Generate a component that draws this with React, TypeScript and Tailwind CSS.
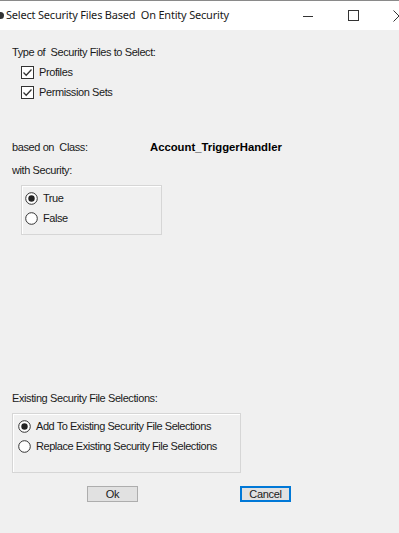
import React from 'react'

const FONT = { fontFamily: '"Liberation Sans", Arial, sans-serif' }

function CheckBox({ label }: { label: string }) {
  return (
    <div className="flex h-[20px] items-center pl-[21px]">
      <svg width="13" height="13" viewBox="0 0 13 13" className="shrink-0">
        <rect x="0.5" y="0.5" width="12" height="12" fill="#ffffff" stroke="#333333" />
        <path d="M2.5 6.5 L5.2 9.2 L10.5 3.5" fill="none" stroke="#333333" strokeWidth="1.3" />
      </svg>
      <span className="ml-[5px] text-[11px] tracking-[-0.4px] text-[#1a1a1a]">{label}</span>
    </div>
  )
}

function Radio({ label, checked = false }: { label: string; checked?: boolean }) {
  return (
    <div className="flex h-[20px] items-center">
      <svg width="13" height="13" viewBox="0 0 13 13" className="shrink-0">
        <circle cx="6.5" cy="6.5" r="5.8" fill="#ffffff" stroke="#333333" />
        {checked && <circle cx="6.5" cy="6.5" r="3.2" fill="#222222" />}
      </svg>
      <span className="ml-[5px] text-[11px] tracking-[-0.45px] text-[#1a1a1a]">{label}</span>
    </div>
  )
}

export default function App() {
  return (
    <div className="h-[533px] w-[399px] overflow-hidden bg-[#f0f0f0]" style={FONT}>
      {/* Title bar */}
      <div className="flex h-[30px] items-center border-t border-[#8a8a8a] bg-white">
        <span className="ml-[-3px] h-[7px] w-[7px] shrink-0 rounded-full bg-[#333333]" />
        <span
          className="ml-[2px] whitespace-pre text-[11px] tracking-[-0.2px] text-[#1a1a1a]"
          style={{ fontFamily: '"Noto Sans", "Liberation Sans", sans-serif' }}
        >
          Select Security Files Based  On Entity Security
        </span>
        <div className="ml-auto flex items-center">
          <svg width="12" height="12" viewBox="0 0 12 12" className="mr-[34px]">
            <path d="M1 6.5 H11" stroke="#333" strokeWidth="1" />
          </svg>
          <svg width="11" height="11" viewBox="0 0 11 11" className="mr-[34px]">
            <rect x="0.5" y="0.5" width="10" height="10" fill="none" stroke="#333" />
          </svg>
          <svg width="6" height="12" viewBox="0 0 6 12">
            <path d="M0.5 0.5 L6 6 M0.5 11.5 L6 6" stroke="#333" strokeWidth="1" fill="none" />
          </svg>
        </div>
      </div>

      {/* Body */}
      <div className="flex flex-col text-[11px] tracking-[-0.4px] text-[#1a1a1a]">
        <div className="mt-[12px] flex h-[20px] items-center whitespace-pre pl-[12px]">
          Type of  Security Files to Select:
        </div>
        <CheckBox label="Profiles" />
        <CheckBox label="Permission Sets" />

        <div className="mt-[35px] flex h-[20px] items-center pl-[12px]">
          <span className="w-[138px] whitespace-pre">based on  Class:</span>
          <span className="text-[11.3px] font-bold tracking-[0px] text-black">Account_TriggerHandler</span>
        </div>
        <div className="mt-[3px] flex h-[20px] items-center pl-[12px]">with Security:</div>

        <div className="ml-[21px] mt-[5px] h-[50px] w-[141px] border border-[#d6d6d6] pl-[3px] pt-[2px] shadow-[inset_1px_1px_0_#ffffff]">
          <Radio label="True" checked />
          <Radio label="False" />
        </div>

        <div className="mt-[153px] flex h-[20px] items-center pl-[12px]">
          Existing Security File Selections:
        </div>
        <div className="ml-[12px] mt-[5px] h-[60px] w-[229px] border border-[#d6d6d6] pl-[5px] pt-[2px] shadow-[inset_1px_1px_0_#ffffff]">
          <Radio label="Add To Existing Security File Selections" checked />
          <Radio label="Replace Existing Security File Selections" />
        </div>

        <div className="mt-[13px] flex tracking-normal">
          <button className="ml-[87px] flex h-[16px] w-[51px] items-center justify-center border border-[#adadad] bg-[#e1e1e1] text-[11px] tracking-[-0.3px] text-[#1a1a1a]">
            Ok
          </button>
          <button className="ml-[102px] flex h-[16px] w-[51px] items-center justify-center border-2 border-[#0078d7] bg-[#e1e1e1] text-[11px] tracking-[-0.3px] text-[#1a1a1a]">
            Cancel
          </button>
        </div>
      </div>
    </div>
  )
}
